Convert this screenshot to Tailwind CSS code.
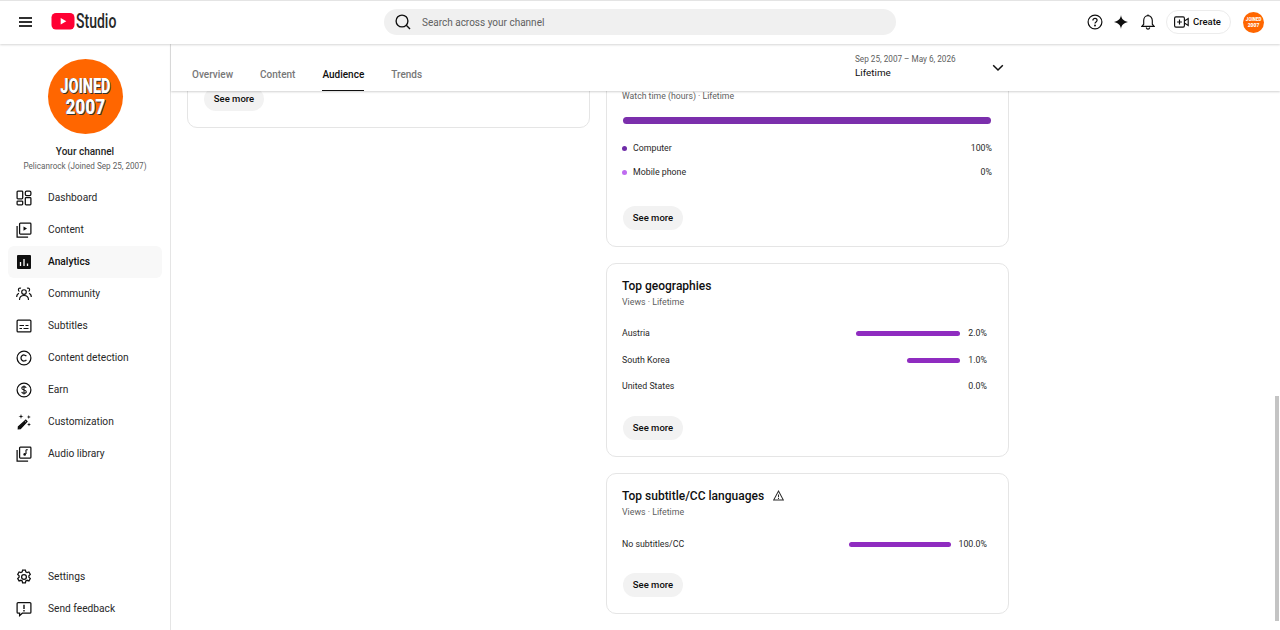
<!DOCTYPE html>
<html>
<head>
<meta charset="utf-8">
<script src="https://cdn.jsdelivr.net/npm/@tailwindcss/browser@4"></script>
</head>
<body class="bg-white overflow-hidden font-['Roboto',sans-serif] text-[#0d0d0d]">
<div class="relative w-[1280px] h-[630px] flex flex-col overflow-hidden">

  <header class="relative z-20 h-[44px] shrink-0 flex items-center pb-[1px] bg-white border-t border-[#e4e4e4] shadow-[0_1px_2px_rgba(0,0,0,0.16)]">
    <button class="ml-[19px] w-[13px] h-[10px] flex flex-col justify-between">
      <span class="block h-[1.6px] bg-[#303030]"></span><span class="block h-[1.6px] bg-[#303030]"></span><span class="block h-[1.6px] bg-[#303030]"></span>
    </button>
    <div class="ml-[19px] mb-[2px] flex items-center w-[65px]">
      <svg width="24" height="17" viewBox="0 0 24 17" class="shrink-0"><rect x="0.5" y="0" width="23" height="16.5" rx="4.5" fill="#ff0033"/><path d="M9.7 5v6.5l5.6-3.25z" fill="#fff"/></svg>
      <span class="ml-[1px] font-['Roboto',sans-serif] font-medium text-[20px] leading-none text-[#282828] origin-left scale-x-[0.7] inline-block">Studio</span>
    </div>
    <div class="ml-[268px] w-[512px] h-[26px] rounded-full bg-[#f0f0f0] flex items-center">
      <svg width="18" height="18" viewBox="0 0 18 18" class="ml-[10px]" fill="none" stroke="#0f0f0f" stroke-width="1.35"><circle cx="8" cy="8" r="5.9"/><path d="M12.3 12.3 16 16"/></svg>
      <span class="ml-[10px] text-[10px] text-[#606060]">Search across your channel</span>
    </div>
    <div class="ml-auto flex items-center">
      <svg width="16" height="16" viewBox="0 0 16 16" fill="none" stroke="#0f0f0f" stroke-width="1.2"><circle cx="8" cy="8" r="6.9"/><path d="M5.9 6.4c0-1.2.9-2 2.1-2s2.1.8 2.1 1.9c0 1.6-2.1 1.6-2.1 3.2"/><circle cx="8" cy="11.5" r=".4" fill="#0f0f0f"/></svg>
      <svg width="14" height="14" viewBox="0 0 14 14" class="ml-[11px]"><path d="M7 0c.5 3.9 2.400 6 7 7-4.600 1-6.500 3.100-7 7-.5-3.900-2.400-6-7-7 4.600-1 6.500-3.100 7-7z" fill="#0f0f0f"/></svg>
      <svg width="14" height="16" viewBox="0 0 14 16" class="ml-[13px]" fill="none" stroke="#0f0f0f" stroke-width="1.15"><path d="M1 12.300h12l-1.700-2.100V6.500c0-2.700-1.800-4.900-4.300-4.900S2.700 3.800 2.700 6.500v3.700z"/><path d="M5.200 13.500c.3 1 .9 1.600 1.800 1.600s1.500-.6 1.800-1.600"/><path d="M7 .5v1.200"/></svg>
      <div class="ml-[11px] w-[65px] h-[24px] rounded-full border border-[#ececec] flex items-center pl-[7px]">
        <svg width="15" height="12" viewBox="0 0 15 12" fill="none" stroke="#0f0f0f" stroke-width="1.15"><rect x=".6" y=".9" width="9.800" height="10.200" rx="1.300"/><path d="M5.500 3.600v4.800M3.100 6h4.800"/><path d="M10.400 5l3.800-2.400v6.800L10.400 7" /></svg>
        <span class="ml-[4px] text-[9.5px] font-medium text-[#0f0f0f]">Create</span>
      </div>
      <div class="ml-[12px] mr-[16px] w-[21px] h-[21px] rounded-full bg-[#ff6600] flex flex-col items-center justify-center text-white font-['Roboto',sans-serif] font-black text-[5px] leading-[6px]">
        <span class="inline-block scale-x-[0.9]">JOINED</span><span class="inline-block">2007</span>
      </div>
    </div>
  </header>

  <div class="flex-1 flex min-h-0">
    <aside class="w-[171px] shrink-0 border-r border-[#e5e5e5] flex flex-col bg-white">
      <div class="flex flex-col items-center w-[170px] pt-[15px]">
        <div class="w-[75px] h-[75px] rounded-full bg-[#ff6600] flex flex-col items-center justify-center text-white font-['Roboto',sans-serif] font-black text-[21px] leading-[21px] [text-shadow:1px_1px_0_#333,-0.5px_0_0_#333]">
          <span class="inline-block scale-x-[0.69]">JOINED</span>
          <span class="inline-block scale-x-[0.82]">2007</span>
        </div>
        <div class="mt-[11px] text-[10px] leading-[14px] font-medium text-[#1f1f1f]">Your channel</div>
        <div class="text-[8.15px] leading-[14px] text-[#606060]">Pelicanrock (Joined Sep 25, 2007)</div>
      </div>
      <nav class="mt-[9px] px-[8px] flex flex-col text-[10.2px] text-[#282828]">
        <a class="h-[32px] flex items-center pl-[8px] rounded-[6px]">
          <svg width="16" height="16" viewBox="0 0 16 16" fill="none" stroke="#0f0f0f" stroke-width="1.25"><rect x="1.100" y="1.100" width="5.600" height="7.800" rx=".8"/><rect x="9.300" y="1.100" width="5.600" height="4.500" rx="1.400"/><rect x="9.300" y="7.700" width="5.600" height="7.200" rx=".8"/><rect x="1.100" y="11" width="5.600" height="3.900" rx=".8"/></svg>
          <span class="ml-[16px]">Dashboard</span>
        </a>
        <a class="h-[32px] flex items-center pl-[8px] rounded-[6px]">
          <svg width="16" height="16" viewBox="0 0 16 16" fill="none" stroke="#0f0f0f" stroke-width="1.25"><rect x="3.600" y="1.100" width="11.300" height="11" rx=".8"/><path d="M1.100 4v11h11"/><path d="M7.500 4.400v4.400l3.500-2.200z" fill="#0f0f0f" stroke="none"/></svg>
          <span class="ml-[16px]">Content</span>
        </a>
        <a class="h-[32px] flex items-center pl-[8px] rounded-[6px] bg-[#f8f8f8] text-[#0f0f0f] font-medium">
          <svg width="16" height="16" viewBox="0 0 16 16"><rect x="1" y="1" width="14" height="14" rx="1" fill="#0f0f0f"/><path d="M4.500 8v4M8 5v7M11.500 9.500V12" stroke="#fff" stroke-width="1.300"/></svg>
          <span class="ml-[16px]">Analytics</span>
        </a>
        <a class="h-[32px] flex items-center pl-[8px] rounded-[6px]">
          <svg width="16" height="16" viewBox="0 0 16 16" fill="none" stroke="#0f0f0f" stroke-width="1.150"><circle cx="8" cy="6" r="2.300"/><path d="M3.500 14c0-3 2-4.500 4.500-4.500s4.500 1.500 4.500 4.500"/><path d="M5 2.300c-1.300-.6-2.600.2-2.600 1.500 0 .8.400 1.400 1 1.700M.7 11c0-2 1-3.300 2.300-3.800M11 2.300c1.300-.6 2.600.2 2.600 1.500 0 .8-.400 1.400-1 1.700M15.300 11c0-2-1-3.300-2.300-3.800"/></svg>
          <span class="ml-[16px]">Community</span>
        </a>
        <a class="h-[32px] flex items-center pl-[8px] rounded-[6px]">
          <svg width="16" height="16" viewBox="0 0 16 16" fill="none" stroke="#0f0f0f" stroke-width="1.250"><rect x="1.100" y="2.100" width="13.800" height="11.800" rx="1"/><path d="M3.500 7.500h4.500M9.500 7.500h3M3.500 10.500h2.500M7.500 10.500h5" stroke-width="1.100"/></svg>
          <span class="ml-[16px]">Subtitles</span>
        </a>
        <a class="h-[32px] flex items-center pl-[8px] rounded-[6px]">
          <svg width="16" height="16" viewBox="0 0 16 16" fill="none" stroke="#0f0f0f" stroke-width="1.250"><circle cx="8" cy="8" r="6.900"/><path d="M10.400 6.200A3 3 0 1 0 10.400 9.800"/></svg>
          <span class="ml-[16px]">Content detection</span>
        </a>
        <a class="h-[32px] flex items-center pl-[8px] rounded-[6px]">
          <svg width="16" height="16" viewBox="0 0 16 16" fill="none" stroke="#0f0f0f" stroke-width="1.250"><circle cx="8" cy="8" r="6.900"/><path d="M10.200 5.900C10 5 9.100 4.600 8 4.600c-1.300 0-2.200.6-2.200 1.600 0 2.300 4.500 1.100 4.500 3.500 0 1-1 1.600-2.300 1.600-1.200 0-2.100-.5-2.300-1.500M8 3.500v9" stroke-width="1.050"/></svg>
          <span class="ml-[16px]">Earn</span>
        </a>
        <a class="h-[32px] flex items-center pl-[8px] rounded-[6px]">
          <svg width="16" height="16" viewBox="0 0 16 16"><path d="M9.800 6.200 11 7.400 4.400 14.700 2.300 14.900 2.400 12.800z" fill="none" stroke="#0f0f0f" stroke-width="1.250"/><path d="M8.500 7.600l1.500 1.500-5.400 5.500-2.200.3.100-2.200z" fill="#0f0f0f"/><path d="M5 0l.6 1.900 1.900.6-1.900.6L5 5l-.6-1.900-1.900-.6 1.900-.6zM12.800 1l.5 1.500 1.500.5-1.500.5-.5 1.500-.5-1.500-1.500-.5 1.500-.5zM13 8.500l.5 1.500 1.500.5-1.500.5-.5 1.500-.5-1.500-1.500-.5 1.500-.5z" fill="#0f0f0f"/></svg>
          <span class="ml-[16px]">Customization</span>
        </a>
        <a class="h-[32px] flex items-center pl-[8px] rounded-[6px]">
          <svg width="16" height="16" viewBox="0 0 16 16" fill="none" stroke="#0f0f0f" stroke-width="1.250"><rect x="3.600" y="1.100" width="11.300" height="11" rx=".8"/><path d="M1.100 4v11h11"/><path d="M10 3.700v4.300" stroke-width="1.100"/><circle cx="8.700" cy="8.400" r="1.300" fill="#0f0f0f" stroke="none"/><path d="M10 3.700h1.800" stroke-width="1.100"/></svg>
          <span class="ml-[16px]">Audio library</span>
        </a>
      </nav>
      <nav class="mt-auto mb-[5px] px-[8px] flex flex-col text-[10.2px] text-[#282828]">
        <a class="h-[32px] flex items-center pl-[8px]">
          <svg width="16" height="16" viewBox="0 0 16 16" fill="none" stroke="#0f0f0f" stroke-width="1.250"><circle cx="8" cy="8" r="2.400"/><path d="M6.600 1h2.800l.4 1.900 1.300.7 1.800-.6 1.400 2.400-1.400 1.300v1.500l1.400 1.300-1.400 2.400-1.800-.6-1.300.7-.4 1.900H6.600l-.4-1.900-1.300-.7-1.800.6-1.400-2.400 1.400-1.300V6.700L1.700 5.400 3.100 3l1.800.6 1.300-.7z"/></svg>
          <span class="ml-[16px]">Settings</span>
        </a>
        <a class="h-[32px] flex items-center pl-[8px]">
          <svg width="16" height="16" viewBox="0 0 16 16" fill="none" stroke="#0f0f0f" stroke-width="1.250"><path d="M2.100 1.600h11.800c.6 0 1 .4 1 1v8.600c0 .6-.4 1-1 1H6.300l-2.700 2.400v-2.400H2.100c-.6 0-1-.4-1-1V2.600c0-.6.4-1 1-1z"/><path d="M8 3.800v4.200M8 9.100v1.300" stroke-width="1.400"/></svg>
          <span class="ml-[16px]">Send feedback</span>
        </a>
      </nav>
    </aside>

    <main class="relative flex-1 min-w-0 flex flex-col">
      <div class="relative z-10 h-[47px] shrink-0 bg-white shadow-[0_1px_2px_rgba(0,0,0,0.18)] flex items-end pl-[21px] text-[10px] font-medium text-[#777]">
        <div class="flex items-start gap-[27px]">
          <span class="h-[30px] pt-[6px]">Overview</span>
          <span class="h-[30px] pt-[6px]">Content</span>
          <span class="h-[30px] pt-[6px] text-[#0f0f0f] border-b-[1.500px] border-[#0f0f0f]">Audience</span>
          <span class="h-[30px] pt-[6px]">Trends</span>
        </div>
        <div class="absolute left-[684px] top-[9px]">
          <div class="text-[8.2px] leading-[12px] font-normal text-[#606060]">Sep 25, 2007 – May 6, 2026</div>
          <div class="mt-[1px] text-[9.9px] leading-[14px] font-normal text-[#0f0f0f]">Lifetime</div>
        </div>
        <svg width="12" height="8" viewBox="0 0 12 8" class="absolute left-[821px] top-[20px]" fill="none" stroke="#0f0f0f" stroke-width="1.500"><path d="M1.200 1.200 6 6l4.800-4.800"/></svg>
      </div>

      <div class="flex-1 min-h-0 overflow-hidden flex gap-[16px] pl-[16px] items-start">
        <section class="w-[403px] h-[100px] mt-[-63px] rounded-[10px] border border-[#e5e5e5] flex flex-col">
          <button class="mt-auto mb-[16px] ml-[16px] w-[60px] h-[24px] rounded-full bg-[#f2f2f2] text-[9.500px] font-medium">See more</button>
        </section>
        <div class="w-[403px] flex flex-col gap-[16px] mt-[-19px]">
          <section class="h-[175px] rounded-[10px] border border-[#e5e5e5] pl-[15px] pr-[16px]">
            <div class="pt-[17px] text-[8.700px] leading-[12px] text-[#606060]">Watch time (hours) · Lifetime</div>
            <div class="mt-[15px] ml-[1px] w-[368px] h-[7px] rounded-full bg-[#7b2fac]"></div>
            <div class="mt-[19px] h-[12px] flex items-center text-[8.800px] text-[#282828]"><span class="mb-[2px] w-[5px] h-[5px] rounded-full bg-[#6f2da8]"></span><span class="ml-[6px]">Computer</span><span class="ml-auto">100%</span></div>
            <div class="mt-[12px] h-[12px] flex items-center text-[8.800px] text-[#282828]"><span class="mb-[2px] w-[5px] h-[5px] rounded-full bg-[#bf6cf0]"></span><span class="ml-[6px]">Mobile phone</span><span class="ml-auto">0%</span></div>
            <button class="mt-[27px] ml-[1px] w-[60px] h-[24px] rounded-full bg-[#f2f2f2] text-[9.500px] font-medium">See more</button>
          </section>
          <section class="h-[194px] rounded-[10px] border border-[#e5e5e5] pl-[15px] pr-[16px]">
            <div class="pt-[15px] text-[12px] leading-[15px] font-medium text-[#0f0f0f]">Top geographies</div>
            <div class="mt-[2px] text-[8.800px] leading-[12px] text-[#606060]">Views · Lifetime</div>
            <div class="mt-[19px] h-[12px] flex items-center text-[8.800px] text-[#282828]"><span class="mt-[2px]">Austria</span><span class="ml-auto w-[104px] h-[5px] rounded-full bg-[#8f2cc0]"></span><span class="mt-[2px] w-[27px] text-right mr-[5px]">2.0%</span></div>
            <div class="mt-[15px] h-[12px] flex items-center text-[8.800px] text-[#282828]"><span class="mt-[2px]">South Korea</span><span class="ml-auto w-[53px] h-[5px] rounded-full bg-[#8f2cc0]"></span><span class="mt-[2px] w-[27px] text-right mr-[5px]">1.0%</span></div>
            <div class="mt-[14px] h-[12px] flex items-center text-[8.800px] text-[#282828]"><span class="mt-[2px]">United States</span><span class="mt-[2px] ml-auto w-[27px] text-right mr-[5px]">0.0%</span></div>
            <button class="mt-[24px] ml-[1px] w-[60px] h-[24px] rounded-full bg-[#f2f2f2] text-[9.500px] font-medium">See more</button>
          </section>
          <section class="h-[141px] rounded-[10px] border border-[#e5e5e5] pl-[15px] pr-[16px]">
            <div class="pt-[15px] flex items-center text-[12px] leading-[15px] font-medium text-[#0f0f0f]">Top subtitle/CC languages
              <svg width="11" height="11" viewBox="0 0 12 12" class="ml-[9px] mb-[2px]" fill="none" stroke="#282828" stroke-width="1.1"><path d="M6 1.200 11.300 11H.7z"/><path d="M6 4.800v3.200M6 8.800v1"/></svg>
            </div>
            <div class="mt-[2px] text-[8.800px] leading-[12px] text-[#606060]">Views · Lifetime</div>
            <div class="mt-[20px] h-[12px] flex items-center text-[8.800px] text-[#282828]"><span class="mt-[2px]">No subtitles/CC</span><span class="ml-auto w-[102px] h-[5px] rounded-full bg-[#8f2cc0]"></span><span class="mt-[2px] w-[36px] text-right mr-[5px]">100.0%</span></div>
            <button class="mt-[23px] ml-[1px] w-[60px] h-[24px] rounded-full bg-[#f2f2f2] text-[9.500px] font-medium">See more</button>
          </section>
        </div>
      </div>
    </main>
  </div>

  <div class="absolute right-[1px] top-[396px] w-[4px] h-[225px] bg-[#c4c4c4] z-30"></div>
</div>
</body>
</html>
